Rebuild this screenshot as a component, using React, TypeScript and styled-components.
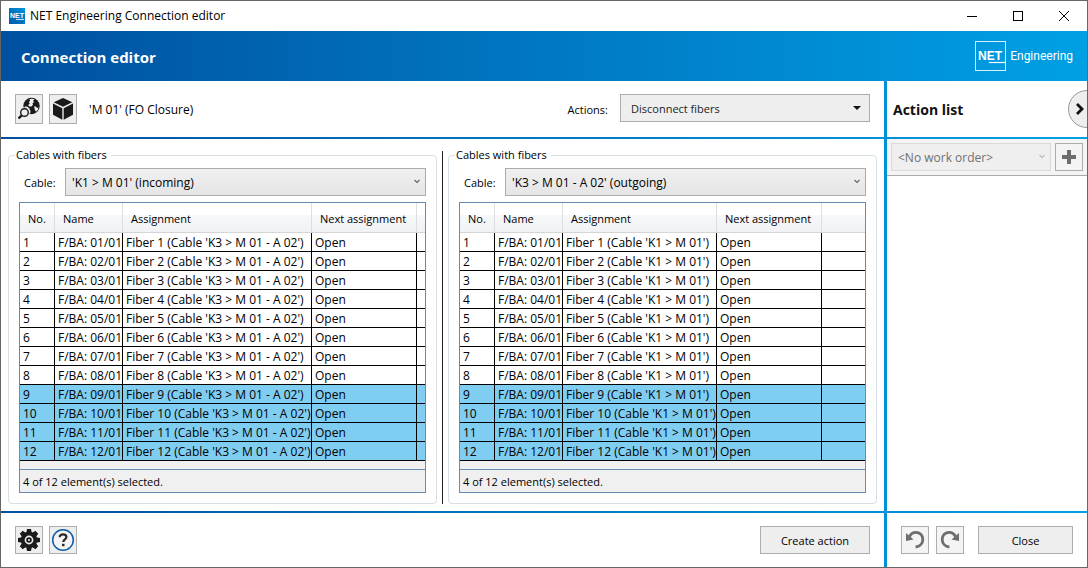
import React from 'react';
import styled, { createGlobalStyle, css } from 'styled-components';

const GlobalStyle = createGlobalStyle`
  *, *::before, *::after { box-sizing: border-box; }
  body {
    margin: 0;
    background: #fff;
    color: #000;
    font: 11px/16px 'Open Sans', 'Noto Sans', sans-serif;
  }
  button, select { font: inherit; color: inherit; }
  h1, h2, p { margin: 0; }
`;

const Window = styled.div`
  display: flex;
  flex-direction: column;
  min-height: 100vh;
  border: 1px solid #666;
  overflow: hidden;
`;

const TitleBar = styled.div`
  display: flex;
  align-items: center;
  height: 30px;
  padding-left: 8px;
  background: #fff;
`;

const WindowTitle = styled.span`
  flex: 1;
  margin-left: 5px;
  font-size: 12px;
`;

const CaptionButton = styled.button`
  display: grid;
  place-items: center;
  width: 46px;
  height: 30px;
  padding: 0;
  border: 0;
  background: transparent;
`;

const Frame = styled.div`
  display: flex;
  flex: 1;
  flex-direction: column;
  background: linear-gradient(90deg, #00509f, #0078c3 50%, #00a0e4);
`;

const Banner = styled.header`
  display: flex;
  align-items: center;
  justify-content: space-between;
  height: 50px;
  padding: 0 14px 0 20px;
  color: #fff;
`;

const BannerTitle = styled.h1`
  font-size: 15px;
  line-height: 20px;
  font-weight: 700;
  padding-top: 2px;
`;

const Brand = styled.div`
  display: flex;
  align-items: center;
  gap: 4px;
  font: 12px/16px Roboto, Arial, sans-serif;
`;

const Panes = styled.div`
  display: grid;
  flex: 1;
  grid-template-columns: minmax(0, 1fr) 200px;
  grid-template-rows: 56px 1fr 54px;
  gap: 2px 3px;
`;

const Toolbar = styled.div<{ $gap?: number }>`
  display: flex;
  align-items: flex-start;
  gap: ${(p) => p.$gap ?? 6}px;
  padding: 13px 14px;
  background: #fff;
`;

const ToolLabel = styled.span`
  padding: 8px 0 0 6px;
  font-size: 12px;
  letter-spacing: normal;
`;

const Spacer = styled.div`
  flex: 1;
`;

const ActionsField = styled.div`
  display: flex;
  align-items: flex-start;
  gap: 12px;
  label { padding-top: 8px; }
`;

const Button = styled.button<{ $size?: 'icon' | 'tall' | 'wide' | 'fill'; $pale?: boolean }>`
  display: grid;
  place-items: center;
  flex: none;
  height: 28px;
  padding: 0;
  border: 1px solid #adadad;
  background: ${(p) => (p.$pale ? '#f4f4f4' : '#eee')};
  ${(p) => {
    switch (p.$size) {
      case 'tall': return css`width: 28px; height: 30px;`;
      case 'wide': return css`width: 110px; padding-top: 2px;`;
      case 'fill': return css`flex: 1; margin-left: 7px; padding-top: 2px;`;
      default: return css`width: 28px;`;
    }
  }}
`;

const SelectBox = styled.div<{ $width?: number }>`
  position: relative;
  ${(p) => (p.$width ? css`width: ${p.$width}px;` : css`flex: 1; min-width: 0;`)}
  svg {
    position: absolute;
    right: 5px;
    top: 10px;
    pointer-events: none;
  }
`;

const Select = styled.select<{ $look?: 'flat' | 'disabled' }>`
  display: block;
  width: 100%;
  height: 28px;
  padding: 2px 24px 0 6px;
  appearance: none;
  border: 1px solid #acacac;
  border-radius: 0;
  background: linear-gradient(#f0f0f0, #e5e5e5);
  font-size: 12px;
  opacity: 1;
  ${(p) => p.$look === 'flat' && css`background: #eee; padding-left: 10px; color: #222; font-size: 11px;`}
  ${(p) => p.$look === 'disabled' && css`background: #efefef; border-color: #d9d9d9; color: #707070;`}
`;

const Workspace = styled.main`
  display: flex;
  gap: 5px;
  padding: 8px 7px 7px;
  background: #fff;
`;

const Splitter = styled.div`
  width: 1px;
  margin-top: 4px;
  background: #222;
`;

const Group = styled.fieldset`
  display: flex;
  flex: 1;
  flex-direction: column;
  gap: 6px;
  min-width: 0;
  margin: 0;
  padding: 5px 10px 10px;
  border: 1px solid #d5dfe5;
  border-radius: 4px;
`;

const Legend = styled.legend`
  margin-left: -4px;
  padding: 0 4px 0 1px;
`;

const CableRow = styled.div`
  display: flex;
  align-items: center;
  label {
    width: 46px;
    padding: 2px 0 0 5px;
  }
`;

const Grid = styled.div`
  display: flex;
  flex: 1;
  flex-direction: column;
  border: 1px solid #688caf;
  background: #f0f0f0;
`;

const Table = styled.table`
  width: 100%;
  table-layout: fixed;
  border-collapse: separate;
  border-spacing: 0;
  white-space: nowrap;
`;

const Th = styled.th`
  height: 30px;
  padding: 2px 0 0 8px;
  border-right: 1px solid #dcdee1;
  border-bottom: 1px solid #d5d5d5;
  background: linear-gradient(#fff 40%, #f7f8fa 40%, #f1f2f4);
  font-weight: 400;
  text-align: left;
  &:last-child { border-right: 0; }
`;

const Row = styled.tr<{ $selected: boolean }>`
  background: ${(p) => (p.$selected ? '#80cdf2' : '#fff')};
`;

const Td = styled.td`
  height: 19px;
  padding: 1px 0 0 3px;
  border-right: 1px solid #000;
  border-bottom: 1px solid #000;
  font-size: 12px;
  &:last-child { border-right: 0; }
`;

const Status = styled.p`
  height: 23px;
  margin-top: auto;
  padding: 4px 3px 0;
  border-top: 1px solid #688caf;
`;

const ActionHeader = styled.div`
  display: flex;
  align-items: center;
  justify-content: space-between;
  padding-left: 6px;
  background: #fff;
  overflow: hidden;
`;

const ActionTitle = styled.h2`
  padding-top: 2px;
  font-size: 14px;
  line-height: 20px;
  font-weight: 700;
  color: #111;
`;

const CollapseButton = styled.button`
  display: flex;
  align-items: center;
  width: 38px;
  height: 38px;
  margin-right: -19px;
  padding: 0 0 0 6px;
  border: 1px solid #999;
  border-radius: 50%;
  background: #eee;
`;

const ActionPane = styled.aside`
  background: #fff;
`;

const OrderBar = styled.div`
  display: flex;
  gap: 4px;
  padding: 4px;
  border-bottom: 1px solid #aaa;
  background: #f4f4f4;
`;

const Chevron = ({ color = '#606060' }: { color?: string }) => (
  <svg width="8" height="8" viewBox="0 0 8 8" fill="none" stroke={color} strokeWidth="1.1">
    <path d="M1.500 2 4 4.500 6.500 2" />
  </svg>
);

const AppIcon = () => (
  <svg width="16" height="16" viewBox="0 0 16 16">
    <defs>
      <linearGradient id="appIcon" x1="0" y1="1" x2="1" y2="0">
        <stop offset="0" stopColor="#0057a8" />
        <stop offset="1" stopColor="#0096dc" />
      </linearGradient>
    </defs>
    <rect width="16" height="16" fill="url(#appIcon)" />
    <text x="1" y="10" fill="#fff" fontFamily="Liberation Sans" fontWeight="700" fontSize="7">NET</text>
    <path d="M7 11.500h8" stroke="#fff" strokeOpacity=".8" />
  </svg>
);

const BrandMark = () => (
  <svg width="31" height="30" viewBox="0 0 31 30">
    <rect x=".5" y=".5" width="30" height="29" fill="none" stroke="#fff" strokeOpacity=".85" />
    <text x="3" y="19" fill="#fff" fontFamily="Liberation Sans" fontWeight="700" fontSize="12">NET</text>
    <path d="M14 21.500h16" stroke="#fff" strokeWidth="1.200" />
  </svg>
);

const GlobeSearchIcon = () => (
  <svg width="24" height="24" viewBox="0 0 24 24">
    <circle cx="14.500" cy="9" r="8.200" fill="#1a1a1a" />
    <g fill="#eee">
      <path d="M12.300 2.200l2.400-.5 2.800.6-1.400 1.400.8 1.600-1.600 1.500.8 1-1.700 1.600-2.300.2-1-1.600 1.600-1.300-.8-1.700 1.300-1.300z" />
      <path d="M17 9.200l2.300.5.6 1.300 1.600-.6-.6 2.300-1.800 2-1.200-1.800z" />
      <path d="M7.600 9.200l2.800.6 1.600 1.500 1.500 2.700-.3 2.400-2-1z" />
    </g>
    <circle cx="7.500" cy="15.500" r="5.200" fill="#eee" />
    <circle cx="7.500" cy="15.500" r="3.800" fill="#eee" stroke="#1a1a1a" strokeWidth="1.400" />
    <path d="M4.700 18.300 1.500 21.500" stroke="#1a1a1a" strokeWidth="2.400" />
  </svg>
);

const CubeIcon = () => (
  <svg width="22" height="24" viewBox="0 0 22 24" fill="#1a1a1a">
    <path d="M11 1 20.300 5.200 11 9.800 1.700 5.200z" />
    <path d="M1 6.600 10.300 11.200V22.800L1 17.800z" />
    <path d="M21 6.600 11.700 11.200V22.800L21 17.800z" />
  </svg>
);

const GearIcon = () => (
  <svg width="24" height="24" viewBox="0 0 24 24">
    <g fill="#1a1a1a">
      <circle cx="12" cy="12" r="8.200" />
      {[0, 45, 90, 135].map((a) => (
        <path key={a} d="M10 1h4l.8 4v14L14 23h-4l-.8-4V5z" transform={`rotate(${a} 12 12)`} />
      ))}
    </g>
    <circle cx="12" cy="12" r="3.600" fill="none" stroke="#eee" strokeWidth="1.600" />
    <circle cx="12" cy="12" r="1" fill="#eee" />
  </svg>
);

const HelpIcon = () => (
  <svg width="24" height="24" viewBox="0 0 24 24" fill="none">
    <circle cx="12" cy="12" r="10.300" fill="#f4f4f4" stroke="#0f5cab" strokeWidth="1.500" />
    <path d="M8.700 9.300C8.700 7.400 10 6.400 12 6.400s3.400 1 3.400 2.700c0 2.300-3.100 2.300-3.100 5" stroke="#2a2a2a" strokeWidth="2.200" />
    <path d="M11 15.800h2.500v2.400H11z" fill="#2a2a2a" />
  </svg>
);

const TurnIcon = ({ flip = false }: { flip?: boolean }) => (
  <svg width="20" height="20" viewBox="0 0 20 20" fill="none">
    <g transform={flip ? 'translate(20 0) scale(-1 1)' : undefined}>
      <path d="M4.500 6.500C6 3.500 8.300 2.300 10.800 2.300c4 0 7 3 7 7 0 4.300-3 7.200-7.200 7.700" stroke="#6e6e6e" strokeWidth="2.800" />
      <path d="M1 3v8l7.500-1.500z" fill="#6e6e6e" />
    </g>
  </svg>
);

interface CableData {
  id: string;
  cable: string;
  target: string;
  assignmentWidth: number;
}

const fibers = Array.from({ length: 12 }, (_, i) => i + 1);

const CablePanel = ({ id, cable, target, assignmentWidth }: CableData) => (
  <Group>
    <Legend>Cables with fibers</Legend>
    <CableRow>
      <label htmlFor={id}>Cable:</label>
      <SelectBox>
        <Select id={id}>
          <option>{cable}</option>
        </Select>
        <Chevron />
      </SelectBox>
    </CableRow>
    <Grid>
      <Table>
        <colgroup>
          <col width={35} />
          <col width={68} />
          <col width={assignmentWidth} />
          <col width={105} />
          <col />
        </colgroup>
        <thead>
          <tr>
            <Th>No.</Th>
            <Th>Name</Th>
            <Th>Assignment</Th>
            <Th>Next assignment</Th>
            <Th />
          </tr>
        </thead>
        <tbody>
          {fibers.map((n) => (
            <Row key={n} $selected={n > 8}>
              <Td>{n}</Td>
              <Td>{`F/BA: ${String(n).padStart(2, '0')}/01`}</Td>
              <Td>{`Fiber ${n} (Cable '${target}')`}</Td>
              <Td>Open</Td>
              <Td />
            </Row>
          ))}
        </tbody>
      </Table>
      <Status>4 of 12 element(s) selected.</Status>
    </Grid>
  </Group>
);

export default function App() {
  return (
    <>
      <GlobalStyle />
      <Window>
        <TitleBar>
          <AppIcon />
          <WindowTitle>NET Engineering Connection editor</WindowTitle>
          <CaptionButton aria-label="Minimize">
            <svg width="10" height="11" stroke="#000"><path d="M0 5.500h10" /></svg>
          </CaptionButton>
          <CaptionButton aria-label="Maximize">
            <svg width="10" height="10" fill="none" stroke="#000"><rect x=".5" y=".5" width="9" height="9" /></svg>
          </CaptionButton>
          <CaptionButton aria-label="Close window">
            <svg width="10" height="10" stroke="#000"><path d="M0 0 10 10M10 0 0 10" /></svg>
          </CaptionButton>
        </TitleBar>
        <Frame>
          <Banner>
            <BannerTitle>Connection editor</BannerTitle>
            <Brand>
              <BrandMark />
              <span>Engineering</span>
            </Brand>
          </Banner>
          <Panes>
            <Toolbar>
              <Button $size="tall" aria-label="Locate on map"><GlobeSearchIcon /></Button>
              <Button $size="tall" aria-label="Show object"><CubeIcon /></Button>
              <ToolLabel>'M 01' (FO Closure)</ToolLabel>
              <Spacer />
              <ActionsField>
                <label htmlFor="actions">Actions:</label>
                <SelectBox $width={250}>
                  <Select id="actions" $look="flat">
                    <option>Disconnect fibers</option>
                  </Select>
                  <svg width="16" height="8" viewBox="0 0 16 8"><path d="M4 2h8L8 6z" fill="#111" /></svg>
                </SelectBox>
              </ActionsField>
            </Toolbar>
            <ActionHeader>
              <ActionTitle>Action list</ActionTitle>
              <CollapseButton aria-label="Collapse action list">
                <svg width="10" height="12" viewBox="0 0 10 12" fill="none" stroke="#111" strokeWidth="2.800">
                  <path d="M2 1 7 6 2 11" />
                </svg>
              </CollapseButton>
            </ActionHeader>
            <Workspace>
              <CablePanel id="cable-in" cable="'K1 > M 01' (incoming)" target="K3 > M 01 - A 02" assignmentWidth={189} />
              <Splitter />
              <CablePanel id="cable-out" cable="'K3 > M 01 - A 02' (outgoing)" target="K1 > M 01" assignmentWidth={154} />
            </Workspace>
            <ActionPane>
              <OrderBar>
                <SelectBox>
                  <Select $look="disabled" disabled aria-label="Work order">
                    <option>&lt;No work order&gt;</option>
                  </Select>
                  <Chevron color="#b8b8b8" />
                </SelectBox>
                <Button $pale aria-label="Add work order">
                  <svg width="14" height="14" viewBox="0 0 14 14" stroke="#6e6e6e" strokeWidth="4">
                    <path d="M7 0v14M0 7h14" />
                  </svg>
                </Button>
              </OrderBar>
            </ActionPane>
            <Toolbar as="footer">
              <Button aria-label="Settings"><GearIcon /></Button>
              <Button aria-label="Help"><HelpIcon /></Button>
              <Spacer />
              <Button $size="wide">Create action</Button>
            </Toolbar>
            <Toolbar as="footer" $gap={7}>
              <Button $pale aria-label="Undo"><TurnIcon /></Button>
              <Button $pale aria-label="Redo"><TurnIcon flip /></Button>
              <Button $size="fill">Close</Button>
            </Toolbar>
          </Panes>
        </Frame>
      </Window>
    </>
  );
}
